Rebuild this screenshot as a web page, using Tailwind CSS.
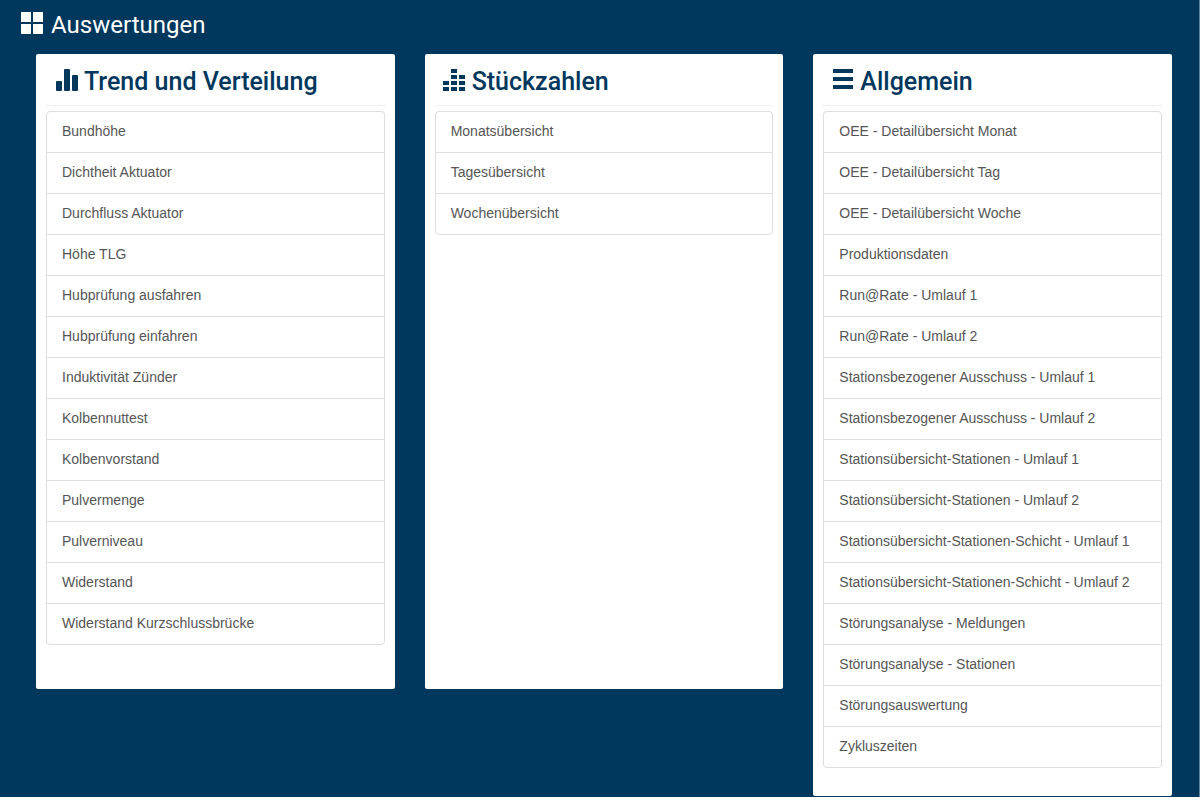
<!DOCTYPE html>
<html lang="de">
<head>
  <meta charset="UTF-8" />
  <meta name="viewport" content="width=device-width, initial-scale=1.0" />
  <title>Auswertungen</title>
  <script src="https://cdn.jsdelivr.net/npm/@tailwindcss/browser@4"></script>
</head>
<body class="bg-white font-['Liberation_Sans',Arial,sans-serif] text-sm text-[#555]">

<main class="bg-[#00375d] border-r border-[#5f86a0] pt-[7px] pb-px pl-9 pr-[27px]">

  <!-- Seitentitel -->
  <h1 class="-ml-[15px] h-[47px] flex items-start gap-2 font-[Roboto,sans-serif] text-2xl leading-9 text-white">
    <svg class="w-[22px] h-[22px] mt-[5px]" viewBox="0 0 22 22" fill="currentColor" aria-hidden="true">
      <path d="M0 0h10v10H0zM12 0h10v10H12zM0 12h10v10H0zM12 12h10v10H12z" />
    </svg>
    Auswertungen
  </h1>

  <div class="grid grid-cols-3 gap-[30px] items-start">

    <!-- Trend und Verteilung -->
    <section class="bg-white rounded-xs px-[10px] pb-7 min-h-[635px]">
      <h2 class="flex items-start gap-[6px] h-[52px] mb-[5px] pt-[10px] pl-[10px] border-b border-[#eee] font-[Roboto,sans-serif] font-medium text-[25px] leading-9 text-[#00375d]">
        <svg class="w-[22px] h-[22px] mt-[5px]" viewBox="0 0 22 22" fill="currentColor" aria-hidden="true">
          <rect x="0" y="12" width="6" height="10" rx="1" />
          <rect x="8" y="0" width="6" height="22" rx="1" />
          <rect x="16" y="6" width="6" height="16" rx="1" />
        </svg>
        Trend und Verteilung
      </h2>
      <ul class="border border-[#ddd] rounded divide-y divide-[#ddd]">
        <li><a href="#" class="block px-[15px] pt-[9px] pb-[11px] leading-5">Bundhöhe</a></li>
        <li><a href="#" class="block px-[15px] pt-[9px] pb-[11px] leading-5">Dichtheit Aktuator</a></li>
        <li><a href="#" class="block px-[15px] pt-[9px] pb-[11px] leading-5">Durchfluss Aktuator</a></li>
        <li><a href="#" class="block px-[15px] pt-[9px] pb-[11px] leading-5">Höhe TLG</a></li>
        <li><a href="#" class="block px-[15px] pt-[9px] pb-[11px] leading-5">Hubprüfung ausfahren</a></li>
        <li><a href="#" class="block px-[15px] pt-[9px] pb-[11px] leading-5">Hubprüfung einfahren</a></li>
        <li><a href="#" class="block px-[15px] pt-[9px] pb-[11px] leading-5">Induktivität Zünder</a></li>
        <li><a href="#" class="block px-[15px] pt-[9px] pb-[11px] leading-5">Kolbennuttest</a></li>
        <li><a href="#" class="block px-[15px] pt-[9px] pb-[11px] leading-5">Kolbenvorstand</a></li>
        <li><a href="#" class="block px-[15px] pt-[9px] pb-[11px] leading-5">Pulvermenge</a></li>
        <li><a href="#" class="block px-[15px] pt-[9px] pb-[11px] leading-5">Pulverniveau</a></li>
        <li><a href="#" class="block px-[15px] pt-[9px] pb-[11px] leading-5">Widerstand</a></li>
        <li><a href="#" class="block px-[15px] pt-[9px] pb-[11px] leading-5">Widerstand Kurzschlussbrücke</a></li>
      </ul>
    </section>

    <!-- Stückzahlen -->
    <section class="bg-white rounded-xs px-[10px] pb-7 min-h-[635px]">
      <h2 class="flex items-start gap-[7px] h-[52px] mb-[5px] pt-[10px] pl-2 border-b border-[#eee] font-[Roboto,sans-serif] font-medium text-[25px] leading-9 text-[#00375d]">
        <svg class="w-[22px] h-[22px] mt-[5px]" viewBox="0 0 22 22" fill="currentColor" aria-hidden="true">
          <path d="M8 0h6v4H8zM8 6h6v4H8zM16 6h6v4h-6zM0 12h6v4H0zM8 12h6v4H8zM16 12h6v4h-6zM0 18h6v4H0zM8 18h6v4H8zM16 18h6v4h-6z" />
        </svg>
        Stückzahlen
      </h2>
      <ul class="border border-[#ddd] rounded divide-y divide-[#ddd]">
        <li><a href="#" class="block px-[15px] pt-[9px] pb-[11px] leading-5">Monatsübersicht</a></li>
        <li><a href="#" class="block px-[15px] pt-[9px] pb-[11px] leading-5">Tagesübersicht</a></li>
        <li><a href="#" class="block px-[15px] pt-[9px] pb-[11px] leading-5">Wochenübersicht</a></li>
      </ul>
    </section>

    <!-- Allgemein -->
    <section class="bg-white rounded-xs px-[10px] pb-7 min-h-[635px]">
      <h2 class="flex items-start gap-[7px] h-[52px] mb-[5px] pt-[10px] pl-[10px] border-b border-[#eee] font-[Roboto,sans-serif] font-medium text-[25px] leading-9 text-[#00375d]">
        <svg class="w-5 h-[22px] mt-[5px]" viewBox="0 0 20 22" fill="currentColor" aria-hidden="true">
          <path d="M0 0h20v4H0zM0 8h20v4H0zM0 16h20v4H0z" />
        </svg>
        Allgemein
      </h2>
      <ul class="border border-[#ddd] rounded divide-y divide-[#ddd]">
        <li><a href="#" class="block px-[15px] pt-[9px] pb-[11px] leading-5">OEE - Detailübersicht Monat</a></li>
        <li><a href="#" class="block px-[15px] pt-[9px] pb-[11px] leading-5">OEE - Detailübersicht Tag</a></li>
        <li><a href="#" class="block px-[15px] pt-[9px] pb-[11px] leading-5">OEE - Detailübersicht Woche</a></li>
        <li><a href="#" class="block px-[15px] pt-[9px] pb-[11px] leading-5">Produktionsdaten</a></li>
        <li><a href="#" class="block px-[15px] pt-[9px] pb-[11px] leading-5">Run@Rate - Umlauf 1</a></li>
        <li><a href="#" class="block px-[15px] pt-[9px] pb-[11px] leading-5">Run@Rate - Umlauf 2</a></li>
        <li><a href="#" class="block px-[15px] pt-[9px] pb-[11px] leading-5">Stationsbezogener Ausschuss - Umlauf 1</a></li>
        <li><a href="#" class="block px-[15px] pt-[9px] pb-[11px] leading-5">Stationsbezogener Ausschuss - Umlauf 2</a></li>
        <li><a href="#" class="block px-[15px] pt-[9px] pb-[11px] leading-5">Stationsübersicht-Stationen - Umlauf 1</a></li>
        <li><a href="#" class="block px-[15px] pt-[9px] pb-[11px] leading-5">Stationsübersicht-Stationen - Umlauf 2</a></li>
        <li><a href="#" class="block px-[15px] pt-[9px] pb-[11px] leading-5">Stationsübersicht-Stationen-Schicht - Umlauf 1</a></li>
        <li><a href="#" class="block px-[15px] pt-[9px] pb-[11px] leading-5">Stationsübersicht-Stationen-Schicht - Umlauf 2</a></li>
        <li><a href="#" class="block px-[15px] pt-[9px] pb-[11px] leading-5">Störungsanalyse - Meldungen</a></li>
        <li><a href="#" class="block px-[15px] pt-[9px] pb-[11px] leading-5">Störungsanalyse - Stationen</a></li>
        <li><a href="#" class="block px-[15px] pt-[9px] pb-[11px] leading-5">Störungsauswertung</a></li>
        <li><a href="#" class="block px-[15px] pt-[9px] pb-[11px] leading-5">Zykluszeiten</a></li>
      </ul>
    </section>

  </div>
</main>

</body>
</html>
